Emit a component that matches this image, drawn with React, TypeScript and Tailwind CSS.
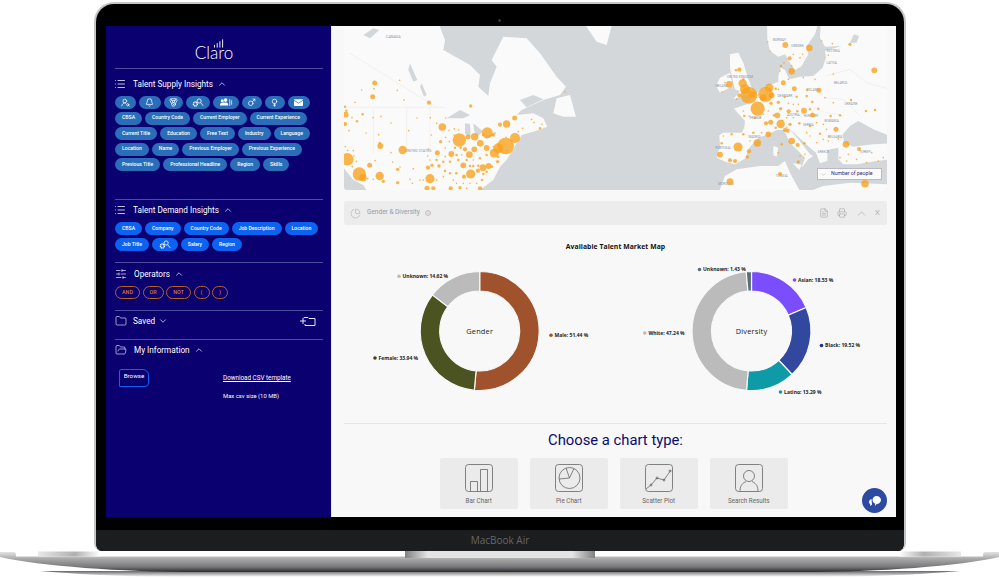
import { ReactNode } from "react";
import {
  Bell,
  ChevronDown,
  ChevronUp,
  FileText,
  Folder,
  FolderOpen,
  Info,
  List,
  Mars,
  Medal,
  PieChart,
  Printer,
  SlidersHorizontal,
  UserRoundSearch,
  Venus,
} from "lucide-react";

const GearSearch = () => (
  <svg viewBox="0 0 16 12" className="w-[12px] h-[9px]" fill="none">
    <circle cx="4.5" cy="8" r="2.6" stroke="white" strokeWidth="2" strokeDasharray="1.4 .6" />
    <circle cx="9.5" cy="4" r="2.8" stroke="white" strokeWidth="1.1" />
    <path d="M11.5 6.2 15 10.5" stroke="white" strokeWidth="1.1" />
  </svg>
);

const Team = () => (
  <svg viewBox="0 0 18 12" className="w-[14px] h-[9px]" fill="white">
    <circle cx="4" cy="3.5" r="2" />
    <circle cx="8.5" cy="2.8" r="2.4" />
    <path d="M1 10c0-3 1.500-4 3-4h5c2 0 3 1 3 4z" />
    <path d="M14 1.500v9M16.500 3v6" stroke="white" strokeWidth="1" />
  </svg>
);

const MailFilled = () => (
  <svg viewBox="0 0 12 9" className="w-[9px] h-[7px]">
    <rect width="12" height="9" rx="1" fill="white" />
    <path d="M0 1.500 6 5.500 12 1.500" stroke="#2a6db8" strokeWidth="1" fill="none" />
  </svg>
);

const Pill = ({ children, color }: { children: ReactNode; color: string }) => (
  <span
    className={`h-[13px] px-[7px] rounded-full flex items-center justify-center text-white text-[5.1px] font-medium whitespace-nowrap ${color}`}
  >
    {children}
  </span>
);

const IconPill = ({ children, wide }: { children: ReactNode; wide: string }) => (
  <span className={`h-[13px] rounded-full bg-[#2a6db8] flex items-center justify-center text-white ${wide}`}>
    {children}
  </span>
);

const OperatorPill = ({ label, wide }: { label: string; wide: string }) => (
  <span
    className={`h-[13px] rounded-full border border-[#b8621f] flex items-center justify-center text-[#d9772b] text-[5.4px] font-medium ${wide}`}
  >
    {label}
  </span>
);

const SectionHead = ({
  icon,
  title,
  gap,
  open,
}: {
  icon: ReactNode;
  title: string;
  gap: string;
  open: boolean;
}) => (
  <div className={`flex items-center h-[12px] text-white text-[8.2px] ${gap}`}>
    {icon}
    <span>{title}</span>
    {open ? (
      <ChevronUp className="w-[10px] h-[10px] -ml-[3px]" strokeWidth={1.6} />
    ) : (
      <ChevronDown className="w-[10px] h-[10px] -ml-[3px]" strokeWidth={1.6} />
    )}
  </div>
);

const supply = [
  "CBSA", "Country Code", "Current Employer", "Current Experience", "Current Title", "Education",
  "Free Text", "Industry", "Language", "Location", "Name", "Previous Employer",
  "Previous Experience", "Previous Title", "Professional Headline", "Region", "Skills",
];

const Sidebar = () => (
  <aside className="w-[225px] shrink-0 bg-[#0a0070] pl-[9px] pr-[8px] font-['Roboto',sans-serif]">
    <div className="h-[42px] flex items-end justify-center pb-[6px] pr-[10px]">
      <div className="relative font-['Lato',sans-serif] font-light text-white text-[17px] leading-[18px]">
        Claro
        <svg viewBox="0 0 11 9" className="absolute right-[9px] -top-[5px] w-[10px] h-[9px]" fill="white">
          <rect x="0" y="6" width="1" height="3" />
          <rect x="3" y="4" width="1" height="5" />
          <rect x="6" y="2" width="1" height="7" />
          <rect x="9" y="0" width="1" height="9" />
        </svg>
      </div>
    </div>

    <section className="border-t border-[#4d4da0] pt-[9px] pb-[28px]">
      <SectionHead
        gap="gap-[7px]"
        open
        title="Talent Supply Insights"
        icon={<List className="w-[12px] h-[12px] -ml-[1px] text-white" strokeWidth={1.5} />}
      />
      <div className="flex flex-wrap gap-x-[3px] gap-y-[2.5px] mt-[6px]">
        <IconPill wide="w-[21px]"><UserRoundSearch className="w-[9px] h-[9px]" /></IconPill>
        <IconPill wide="w-[21.500px]"><Bell className="w-[9px] h-[9px]" /></IconPill>
        <IconPill wide="w-[19.500px]"><Medal className="w-[9px] h-[9px]" /></IconPill>
        <IconPill wide="w-[23.500px]"><GearSearch /></IconPill>
        <IconPill wide="w-[26px]"><Team /></IconPill>
        <IconPill wide="w-[20px]"><Mars className="w-[9px] h-[9px]" /></IconPill>
        <IconPill wide="w-[20.500px]"><Venus className="w-[9px] h-[9px]" /></IconPill>
        <IconPill wide="w-[21.500px]"><MailFilled /></IconPill>
        {supply.map((label) => (
          <Pill key={label} color="bg-[#2a6db8]">{label}</Pill>
        ))}
      </div>
    </section>

    <section className="border-t border-[#4d4da0] pt-[4px] pb-[11px]">
      <SectionHead
        gap="gap-[7px]"
        open
        title="Talent Demand Insights"
        icon={<List className="w-[12px] h-[12px] -ml-[1px] text-white" strokeWidth={1.5} />}
      />
      <div className="flex flex-wrap gap-x-[3px] gap-y-[3px] mt-[6px]">
        {["CBSA", "Company", "Country Code", "Job Description", "Location", "Job Title"].map((label) => (
          <Pill key={label} color="bg-[#0d62f0]">{label}</Pill>
        ))}
        <Pill color="bg-[#0d62f0]"><GearSearch /></Pill>
        <Pill color="bg-[#0d62f0]">Salary</Pill>
        <Pill color="bg-[#0d62f0]">Region</Pill>
      </div>
    </section>

    <section className="border-t border-[#4d4da0] pt-[5px] pb-[11px]">
      <SectionHead
        gap="gap-[7px]"
        open
        title="Operators"
        icon={<SlidersHorizontal className="w-[12px] h-[12px] text-white" strokeWidth={1.3} />}
      />
      <div className="flex gap-[2.5px] mt-[6px]">
        <OperatorPill label="AND" wide="w-[25px]" />
        <OperatorPill label="OR" wide="w-[21px]" />
        <OperatorPill label="NOT" wide="w-[25px]" />
        <OperatorPill label="(" wide="w-[16px]" />
        <OperatorPill label=")" wide="w-[16px]" />
      </div>
    </section>

    <section className="border-t border-[#4d4da0] pt-[4px] pb-[12px] flex items-center justify-between pr-[7px]">
      <SectionHead
        gap="gap-[6px]"
        open={false}
        title="Saved"
        icon={<Folder className="w-[12px] h-[12px] text-white" strokeWidth={1.2} />}
      />
      <svg viewBox="0 0 16 10" className="w-[16px] h-[10px]" fill="none" stroke="white" strokeWidth="0.9">
        <path d="M0 5h6M3 2v6" />
        <path d="M4 2V1.500h4l1 1h6v7H5V8" />
      </svg>
    </section>

    <section className="border-t border-[#4d4da0] pt-[4px]">
      <SectionHead
        gap="gap-[7px]"
        open
        title="My Information"
        icon={<FolderOpen className="w-[12px] h-[12px] text-white" strokeWidth={1.2} />}
      />
      <div className="flex items-start mt-[13px] ml-[4px]">
        <button className="w-[30px] h-[18px] border border-[#0d62f0] rounded-tr-[6px] rounded-br-[4px] rounded-tl-[2px] text-white text-[6.2px] pb-[3px]">
          Browse
        </button>
        <div className="ml-[74px] pt-[5px] text-white">
          <p className="underline text-[6.3px]">Download CSV template</p>
          <p className="mt-[9px] text-[5.9px]">Max csv size (10 MB)</p>
        </div>
      </div>
    </section>
  </aside>
);

// bubbles are read off the picture, [x, y, r]
const usBubbles = [
  [134,189,6],[132,206,2],[95,210,2],[128,230,6],[209,181,2],[202,211,2],[222,240,2],[75,247,2],[297,248,5],[422,258,4],[705,216,2],[45,260,3],[49,272,3],[47,284,7],[98,283,3],[66,293,2],[81,304,3],[129,293,2],[153,289,2],[183,309,2],[45,312,5],[57,332,2],[108,339,2],[146,344,2],[236,332,2],[261,294,2],[301,293,2],[347,294,2],[320,310,2],[337,321,9],[357,331,2],[373,326,2],[386,330,2],[372,345,2],[388,360,16],[414,351,6],[434,350,9],[472,338,13],[460,345,3],[490,345,4],[510,314,5],[530,312,9],[554,294,6],[605,298,2],[612,308,2],[630,325,3],[636,313,2],[578,325,2],[565,335,2],[555,354,12],[528,352,2],[527,378,20],[505,385,12],[493,399,11],[470,384,7],[451,370,8],[433,388,7],[418,404,8],[405,388,5],[392,383,3],[375,383,3],[364,402,7],[332,365,4],[347,352,2],[358,365,2],[346,384,2],[322,398,6],[295,387,2],[151,378,7],[149,369,3],[218,390,10],[183,398,2],[304,345,2],[52,418,15],[72,408,2],[46,380,2],[53,391,2],[70,392,2],[119,436,6],[135,422,2],[79,424,2],[67,440,2],[88,462,16],[99,473,9],[149,468,10],[160,484,4],[113,476,2],[130,478,2],[203,448,4],[210,441,2],[188,426,2],[250,446,2],[240,478,2],[270,480,2],[203,488,4],[247,490,2],[300,476,11],[291,505,6],[310,505,5],[362,505,5],[450,505,5],[422,462,11],[402,470,5],[400,436,7],[420,438,3],[430,438,3],[445,437,3],[459,443,8],[476,438,7],[486,440,3],[503,425,4],[505,410,3],[444,452,5],[460,462,3],[470,455,3],[379,460,3],[360,460,3],[345,453,3],[327,438,4],[306,436,4],[294,443,5],[340,425,3],[320,420,3],[300,420,2],[360,425,3],[385,420,3],[410,420,3],[293,408,2],[280,480,2],[320,480,2],[340,470,2],[370,480,2],[390,503,4],[410,505,2],[380,490,2],[400,490,2],[420,490,2],[440,490,2],[456,480,3],[490,380,2],[470,405,3],[450,415,3],[430,420,2],[380,405,3],[395,405,2],[530,392,2],[346,410,2],
];

const euBubbles = [
  [226,57,7],[298,66,8],[239,97,5],[245,136,8],[213,120,3],[210,135,2],[367,53,2],[420,55,4],[493,133,7],[78,133,3],[88,131,5],[58,175,8],[100,160,3],[98,172,10],[105,190,12],[117,208,20],[88,208,5],[126,205,8],[143,248,17],[167,205,18],[178,185,10],[160,215,8],[185,208,7],[197,188,3],[220,170,6],[253,188,6],[292,192,3],[327,193,6],[290,210,3],[307,228,3],[260,212,3],[224,213,3],[205,229,4],[183,232,4],[212,248,4],[236,256,5],[282,254,7],[300,250,3],[325,248,3],[308,267,6],[262,256,3],[202,268,7],[192,268,3],[182,289,6],[168,292,5],[212,294,10],[197,305,3],[240,295,4],[225,312,5],[233,314,5],[175,325,7],[142,351,9],[84,363,11],[30,386,7],[60,403,5],[75,405,5],[117,376,5],[112,393,4],[245,345,8],[263,357,5],[283,352,3],[408,355,8],[447,369,5],[378,310,6],[330,323,3],[300,300,3],[268,292,3],[362,270,3],[390,268,3],[423,222,3],[468,255,3],[495,252,3],[60,467,8],[210,444,5],[465,473,9],[265,408,4],[270,390,2],[285,385,2],[215,355,3],[205,380,2],[65,325,3],[35,352,3],[40,330,2],[100,325,3],[155,320,2],[130,320,3],[120,345,2],[135,275,3],[118,270,2],[103,270,3],[100,255,2],[235,232,2],[150,275,2],[160,265,2],[175,255,2],[250,235,2],[265,235,2],[320,290,2],[340,295,2],[350,310,2],[320,350,2],[355,345,2],[340,340,2],[300,330,2],[290,320,2],[360,330,2],[385,338,2],[415,385,2],[440,400,2],[470,410,2],[505,405,2],[520,395,2],[390,395,2],[410,405,2],[485,380,2],[22,180,2],[36,198,2],[45,170,2],[80,220,2],[345,215,2],[370,230,2],[270,95,2],[278,85,2],[250,85,2],[180,75,2],[245,120,2],[222,110,2],[173,48,2],[335,45,2],[355,88,2],[370,145,2],[315,160,2],[280,155,2],[235,160,2],[205,190,2],[250,275,2],[230,275,2],[218,283,2],
];

const euLabels: [string, number, number][] = [
  ["NORWAY",208,46],["SWEDEN",262,62],["ESTONIA",370,78],["LATVIA",365,113],["BELARUS",392,173],["POLAND",308,195],["DENMARK",225,212],["UKRAINE",423,236],["FRANCE",137,280],["AUSTRIA",250,270],["HUNGARY",303,272],["ROMANIA",365,288],["BULGARIA",375,335],["SERBIA",295,300],["GREECE",340,382],["TURKEY",465,382],["PORTUGAL",40,368],["MADRID",133,337],["UNITED KINGDOM",90,155],["IRELAND",35,182],["MOROCCO",48,478],["TUNISIA",215,452],
];

const TalentMap = () => (
  <div className="relative h-[164px] rounded-b-[3px] overflow-hidden">
    <svg viewBox="344 26 543 164" className="w-full h-full block bg-[#d3d7da]">
      <g transform="translate(330 20) scale(.3333)" fill="#fafafa">
        <path d="M0 0H322L345 60 340 90 420 135 450 165 445 200 475 228 480 190 500 140 485 120 500 90 520 50 590 55 630 100 680 170 708 200 690 225 640 240 575 270 560 285 610 280 640 295 652 320 610 335 575 345 560 370 545 395 530 420 510 440 490 480 450 510 450 530H110V512L100 495 70 480 42 445 0 400Z" />
        <path d="M680 235 720 225 738 290 700 290 670 280Z" />
        <path d="M768 18H845L830 75 800 65Z" />
        <g fill="#d3d7da">
          <path d="M350 295 390 270 420 285 400 295 370 295Z" />
          <path d="M405 310 420 312 422 350 405 342Z" />
          <path d="M430 310 460 335 440 350 432 330Z" />
          <path d="M462 352 495 335 500 340 470 358Z" />
          <path d="M100 45 130 25 148 30 120 55Z" />
          <path d="M240 130 262 180 250 185 235 150Z" />
          <path d="M275 190 290 225 282 230 270 200Z" />
          <path d="M570 240 610 225 640 238 590 262Z" />
        </g>
        <path d="M42 262H345M230 262V400M300 262V400M130 262V400M60 100 320 262" stroke="#eee5e5" strokeWidth="1.500" fill="none" />
        <text x="190" y="55" fontSize="11" fill="#8896a3" textAnchor="middle">CANADA</text>
        <text x="265" y="395" fontSize="11" fill="#8896a3" textAnchor="middle">UNITED STATES</text>
      </g>
      <g transform="translate(710 26) scale(.3333)" fill="#fafafa">
        <path d="M171-10 172 40 180 75 205 92 225 85 240 110 255 132 275 120 295 85 290 60 315 25 325-10Z" />
        <path d="M332-10 330 35 345 62 395 60 345 75 348 95 338 125 310 150 270 152 238 160 225 132 212 125 205 150 205 168 170 180 150 192 128 215 110 235 72 248 105 285 103 305 95 320 40 320 28 328 30 360 20 395 48 408 75 415 105 398 118 365 145 335 175 325 200 312 222 312 230 300 262 330 300 365 318 380 330 412 352 405 352 372 385 365 385 400 400 415 440 415 500 405 545 400V-10Z" />
        <path d="M222 312 235 305 265 340 300 385 310 390 295 400 275 425 285 395 265 375 240 350Z" />
        <path d="M248 412 275 416 268 432Z" />
        <path d="M190 360 205 365 200 392 190 388Z" />
        <path d="M60 85 85 80 100 110 115 160 125 185 135 200 95 210 70 220 90 195 75 190 65 150 60 125Z" />
        <path d="M30 155 60 140 68 180 30 200 18 180Z" />
        <path d="M0 510 22 510 45 450 80 430 150 420 205 420 225 405 240 440 275 505 340 480 420 470 545 475V520H0Z" />
        <path fill="#d3d7da" d="M398 325 420 300 445 285 490 310 540 330 540 352 490 355 430 362 402 350Z" />
        <path fill="#d3d7da" d="M420 50 432 25 447 30 440 50Z" />
        <path d="M345 150 420 130 470 170 540 190M340 215 400 220 450 270M290 240 350 260 400 270" stroke="#eee5e5" strokeWidth="1.500" fill="none" />
        {euLabels.map(([name, x, y]) => (
          <text key={name} x={x} y={y} fontSize="9.5" fill="#8896a3" textAnchor="middle">{name}</text>
        ))}
      </g>
      <g transform="translate(330 20) scale(.3333)" fill="#f9a01b" fillOpacity=".78">
        {usBubbles.map(([x, y, r], i) => (
          <circle key={i} cx={x} cy={y} r={r * 1.25} />
        ))}
      </g>
      <g transform="translate(710 26) scale(.3333)" fill="#f9a01b" fillOpacity=".78">
        {euBubbles.map(([x, y, r], i) => (
          <circle key={i} cx={x} cy={y} r={r * 1.25} />
        ))}
      </g>
    </svg>
    <div className="absolute left-[473px] top-[142px] w-[65px] h-[12px] bg-white/90 border border-[#b9b9c9] flex items-center pl-[2px] gap-[4px] text-[5.2px] text-[#2a2a80] font-['Roboto',sans-serif]">
      <ChevronDown className="w-[7px] h-[7px] text-[#888]" strokeWidth={1.2} />
      Number of people
    </div>
  </div>
);

type Slice = { value: number; color: string };
type Tag = { text: string; color: string; x: number; y: number };

const polar = (cx: number, cy: number, r: number, pct: number) => {
  const a = (pct / 100) * Math.PI * 2 - Math.PI / 2;
  return `${(cx + r * Math.cos(a)).toFixed(2)} ${(cy + r * Math.sin(a)).toFixed(2)}`;
};

const Donut = ({
  viewBox,
  cx,
  title,
  slices,
  tags,
}: {
  viewBox: string;
  cx: number;
  title: string;
  slices: Slice[];
  tags: Tag[];
}) => {
  const cy = 331;
  let start = 0;
  return (
    <svg viewBox={viewBox} className="w-1/2 h-full block">
      {slices.map((s) => {
        const end = start + s.value;
        const large = s.value > 50 ? 1 : 0;
        const d = `M${polar(cx, cy, 59.5, start)}A59.5 59.5 0 ${large} 1 ${polar(cx, cy, 59.5, end)}L${polar(cx, cy, 40, end)}A40 40 0 ${large} 0 ${polar(cx, cy, 40, start)}Z`;
        start = end;
        return <path key={s.color} d={d} fill={s.color} stroke="#f8f8f8" strokeWidth="1.2" />;
      })}
      <text x={cx} y={333.500} textAnchor="middle" fontSize="7.4" letterSpacing=".2" fill="#222" fontFamily="'Open Sans',sans-serif">
        {title}
      </text>
      {tags.map((t) => (
        <g key={t.text}>
          <circle cx={t.x} cy={t.y} r="1.8" fill={t.color} />
          <text x={t.x + 3.6} y={t.y + 1.8} fontSize="5" fontWeight="700" fill="#222" fontFamily="'Open Sans',sans-serif">
            {t.text}
          </text>
        </g>
      ))}
    </svg>
  );
};

const ChartCard = ({ label, children }: { label: string; children: ReactNode }) => (
  <div className="w-[77.500px] h-[51px] bg-[#ebebeb] rounded-[2px] flex flex-col items-center pt-[6px] text-[6.3px] text-[#666]">
    <svg viewBox="0 0 28 28" className="w-[28px] h-[28px]" fill="none" stroke="#666" strokeWidth="0.8">
      <rect x=".5" y=".5" width="27" height="27" rx="3" />
      {children}
    </svg>
    <span className="mt-[5px]">{label}</span>
  </div>
);

export default function App() {
  return (
    <div className="w-[999px] h-[579px] bg-white overflow-hidden pt-[2px] font-['Roboto',sans-serif]">
      <div className="ml-[94px] w-[812px] h-[549px] bg-black border-x-2 border-t-2 border-[#c6c6c6] rounded-t-[20px] rounded-b-[8px] overflow-hidden flex flex-col">
        <div className="relative mt-[22px] w-[790px] h-[491px] ml-[10px] flex">
          <span className="absolute left-[392px] -top-[7px] w-[3px] h-[3px] rounded-full bg-[#333]" />
          <Sidebar />
          <main className="flex-1 bg-[#f8f8f8] pl-[12px] pr-[9px] border-l border-[#e8e8e8]">
            <TalentMap />
            <div className="mt-[11px] h-[24px] bg-[#ececec] rounded-[2px] flex items-center pl-[6px] pr-[7px] text-[6.5px] text-[#999]">
              <PieChart className="w-[11px] h-[11px] text-[#aaa]" strokeWidth={1.2} />
              <span className="ml-[6px]">Gender &amp; Diversity</span>
              <Info className="w-[6px] h-[6px] ml-[5px]" />
              <div className="ml-auto flex items-center gap-[6px] text-[#999]">
                <FileText className="w-[10px] h-[10px]" strokeWidth={1.2} />
                <Printer className="w-[10px] h-[10px] ml-[2px]" strokeWidth={1.2} />
                <ChevronUp className="w-[13px] h-[13px] ml-[2px]" strokeWidth={1} />
                <span className="text-[8px] font-light ml-[1px]">X</span>
              </div>
            </div>
            <h3 className="mt-[17px] h-[10px] leading-[10px] text-center text-[6.8px] font-bold text-[#111] tracking-[.06px] font-['Open_Sans',sans-serif]">
              Available Talent Market Map
            </h3>
            <div className="flex h-[150px] mt-[10px]">
              <Donut
                viewBox="344 262 271.500 150"
                cx={479.7}
                title="Gender"
                slices={[
                  { value: 51.44, color: "#a0522d" },
                  { value: 33.94, color: "#4b5320" },
                  { value: 14.62, color: "#bbbbbb" },
                ]}
                tags={[
                  { text: "Unknown: 14.62 %", color: "#bbbbbb", x: 399, y: 276.3 },
                  { text: "Male: 51.44 %", color: "#a0522d", x: 551, y: 335.3 },
                  { text: "Female: 33.94 %", color: "#3d4320", x: 375, y: 358 },
                ]}
              />
              <Donut
                viewBox="615.500 262 271.500 150"
                cx={751}
                title="Diversity"
                slices={[
                  { value: 18.53, color: "#7a4dff" },
                  { value: 19.52, color: "#32489f" },
                  { value: 13.29, color: "#0e9aa7" },
                  { value: 47.24, color: "#bbbbbb" },
                  { value: 1.42, color: "#546e7a" },
                ]}
                tags={[
                  { text: "Unknown: 1.43 %", color: "#546e7a", x: 699, y: 269.5 },
                  { text: "Asian: 18.53 %", color: "#7a4dff", x: 794, y: 280 },
                  { text: "Black: 19.52 %", color: "#1d2f8f", x: 821, y: 345.5 },
                  { text: "Latino: 13.29 %", color: "#0e9aa7", x: 780, y: 392 },
                  { text: "White: 47.24 %", color: "#bbbbbb", x: 644.3, y: 333 },
                ]}
              />
            </div>
            <div className="mt-[11px] border-t border-[#e6e6e6] pt-[7px] relative">
              <h2 className="text-center text-[#0b0b6f] text-[14.8px] leading-[18px]">Choose a chart type:</h2>
              <div className="flex gap-[12.500px] ml-[96px] mt-[9px]">
                <ChartCard label="Bar Chart">
                  <path d="M5.500 27V17.500h7V27M15.500 27V5.500h7V27" />
                </ChartCard>
                <ChartCard label="Pie Chart">
                  <circle cx="14.500" cy="14" r="10.500" />
                  <path d="M14.500 14 19 4.500M14.500 14 4 15M14.500 14 11 4" />
                </ChartCard>
                <ChartCard label="Scatter Plot">
                  <path d="M1 25 6 21 12 14 19 16 26 6" />
                  <circle cx="6" cy="21" r="1" />
                  <circle cx="12" cy="14" r="1" />
                  <circle cx="19" cy="16" r="1" />
                  <circle cx="25" cy="7" r="1" />
                </ChartCard>
                <ChartCard label="Search Results">
                  <circle cx="14" cy="12" r="5.500" />
                  <path d="M5 27c0-6 3-8 6-9.500M23 27c0-6-3-8-6-9.500" />
                </ChartCard>
              </div>
              <button className="absolute right-0 top-[64px] w-[25px] h-[25px] rounded-full bg-[#2b4aa0] flex items-center justify-center">
                <svg viewBox="0 0 14 14" className="w-[14px] h-[14px]" fill="white">
                  <path d="M8.500 2C11 2 13 3.700 13 6s-2 4-4.200 4L7 12l.3-2.300C5.500 9 4.500 7.600 4.500 6c0-2.300 1.800-4 4-4z" />
                  <path d="M3.500 5C2 5.500 1 6.500 1 8c0 1 .5 1.800 1.300 2.300L2.200 12 4 10.800z" />
                </svg>
              </button>
            </div>
          </main>
        </div>
        <div className="mt-[13px] flex-1 bg-[#1c1d1f] flex items-center justify-center text-[#666769] text-[10px] font-['Open_Sans',sans-serif]">
          MacBook Air
        </div>
      </div>
      <svg viewBox="0 0 999 28" className="w-[999px] h-[28px] block">
        <defs>
          <linearGradient id="deck" x1="0" y1="0" x2="0" y2="1">
            <stop offset="0" stopColor="#e4e4e4" />
            <stop offset=".35" stopColor="#a8a8a8" />
            <stop offset=".75" stopColor="#77777a" />
            <stop offset="1" stopColor="#2a2a2c" />
          </linearGradient>
          <linearGradient id="hingeL" x1="0" y1="0" x2="1" y2="0">
            <stop offset="0" stopColor="#e8e8e8" />
            <stop offset=".6" stopColor="#b0b0b0" />
            <stop offset="1" stopColor="#ffffff" />
          </linearGradient>
          <linearGradient id="notch" x1="0" y1="0" x2="1" y2="0">
            <stop offset="0" stopColor="#808080" />
            <stop offset=".12" stopColor="#e4e4e4" />
            <stop offset=".88" stopColor="#e4e4e4" />
            <stop offset="1" stopColor="#808080" />
          </linearGradient>
          <linearGradient id="shade" x1="0" y1="0" x2="0" y2="1">
            <stop offset="0" stopColor="#666" />
            <stop offset="1" stopColor="#fff" />
          </linearGradient>
        </defs>
        <path d="M40 20C90 24 130 26 200 26H800C870 26 910 24 960 20Z" fill="url(#shade)" />
        <path d="M0 1H14Q16 1 16 4L16 5.500H983V4Q983 1 985 1H999V6C960 15 880 21 800 21H200C120 21 40 15 0 6Z" fill="url(#deck)" />
        <rect x="38" y="0.500" width="62" height="5" fill="url(#hingeL)" />
        <rect x="899" y="0.500" width="62" height="5" fill="url(#hingeL)" transform="rotate(180 930 3)" />
        <rect x="405" y="0" width="190" height="7" fill="url(#notch)" />
      </svg>
    </div>
  );
}
